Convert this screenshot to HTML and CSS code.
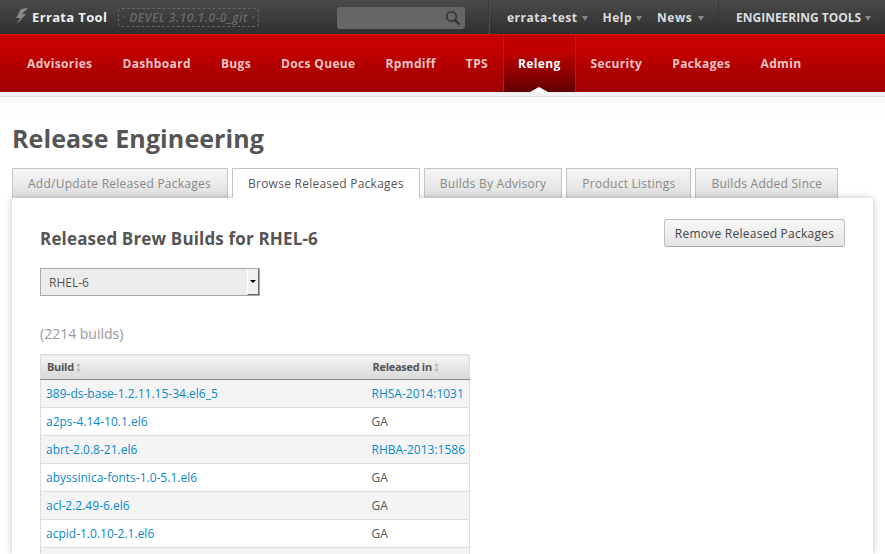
FILE: index.html
```html
<!DOCTYPE html>
<html lang="en">
  <head>
    <meta charset="UTF-8" />
    <title>Release Engineering</title>
    <link rel="stylesheet" href="styles.css">
  </head>
  <body>
    <div class="topbar">
      <div class="brand">
        <svg class="bolt" width="14" height="16" viewBox="0 0 14 16"><path d="M13 0 L6 1 L1 10 L5 10 L2 16 L11 6 L7 6 Z" fill="#8a8a8a"/></svg>
        <span class="brand-name">Errata Tool</span>
      </div>
      <span class="version">&middot; DEVEL 3.10.1.0-0_git &middot;</span>
      <div class="search">
        <svg width="16" height="16" viewBox="0 0 16 16"><circle cx="6.5" cy="6.5" r="4.8" fill="none" stroke="#333" stroke-width="1.6"/><path d="M10 10 L14.5 14.5" stroke="#333" stroke-width="2.4"/></svg>
      </div>
      <div class="user-menu">
        <span class="menu-item">errata-test<i class="caret"></i></span>
        <span class="menu-item">Help<i class="caret"></i></span>
        <span class="menu-item news">News<i class="caret"></i></span>
      </div>
      <div class="tools-menu">
        <span class="menu-item">ENGINEERING TOOLS<i class="caret"></i></span>
      </div>
    </div>

    <div class="mainnav">
      <a>Advisories</a>
      <a>Dashboard</a>
      <a>Bugs</a>
      <a>Docs Queue</a>
      <a>Rpmdiff</a>
      <a>TPS</a>
      <a class="active">Releng</a>
      <a>Security</a>
      <a>Packages</a>
      <a>Admin</a>
    </div>
    <div class="nav-rule"></div>

    <div class="content">
      <h1>Release Engineering</h1>
      <div class="tabs">
        <span class="tab">Add/Update Released Packages</span>
        <span class="tab current">Browse Released Packages</span>
        <span class="tab">Builds By Advisory</span>
        <span class="tab">Product Listings</span>
        <span class="tab">Builds Added Since</span>
      </div>
      <div class="panel">
        <div class="panel-head">
          <h2>Released Brew Builds for RHEL-6</h2>
          <button class="btn">Remove Released Packages</button>
        </div>
        <div class="select">
          <span class="select-value">RHEL-6</span>
          <span class="select-arrow"><i></i></span>
        </div>
        <p class="count">(2214 builds)</p>
        <table class="builds">
          <thead>
            <tr>
              <th class="col-build">Build <svg class="sort" width="5" height="9" viewBox="0 0 5 9"><path d="M2.5 0 L5 3 L3 3 L3 6 L5 6 L2.5 9 L0 6 L2 6 L2 3 L0 3 Z" fill="#bbb"/></svg></th>
              <th>Released in <svg class="sort" width="5" height="9" viewBox="0 0 5 9"><path d="M2.5 0 L5 3 L3 3 L3 6 L5 6 L2.5 9 L0 6 L2 6 L2 3 L0 3 Z" fill="#bbb"/></svg></th>
            </tr>
          </thead>
          <tbody>
            <tr><td><a>389-ds-base-1.2.11.15-34.el6_5</a></td><td><a>RHSA-2014:1031</a></td></tr>
            <tr><td><a>a2ps-4.14-10.1.el6</a></td><td>GA</td></tr>
            <tr><td><a>abrt-2.0.8-21.el6</a></td><td><a>RHBA-2013:1586</a></td></tr>
            <tr><td><a>abyssinica-fonts-1.0-5.1.el6</a></td><td>GA</td></tr>
            <tr><td><a>acl-2.2.49-6.el6</a></td><td>GA</td></tr>
            <tr><td><a>acpid-1.0.10-2.1.el6</a></td><td>GA</td></tr>
            <tr><td></td><td></td></tr>
          </tbody>
        </table>
      </div>
    </div>
  </body>
</html>
```

FILE: styles.css
```css
html, body {
  margin: 0;
  height: 554px;
  overflow: hidden;
}
body {
  font-family: "Open Sans", "Noto Sans", sans-serif;
  font-size: 12px;
  color: #555;
  background: #fff;
}

.topbar {
  display: flex;
  align-items: center;
  height: 34px;
  background: linear-gradient(#4a4a4a, #2f2f2f);
  color: #ddd;
}
.topbar > * {
  flex: none;
}
.brand {
  display: flex;
  align-items: center;
  margin-left: 15px;
  width: 103px;
}
.bolt {
  margin: -2px 3px 0 0;
}
.brand-name {
  color: #f0f0f0;
  font-size: 13px;
  font-weight: 700;
  letter-spacing: 0.35px;
}
.version {
  width: 141px;
  height: 19px;
  line-height: 17px;
  box-sizing: border-box;
  border: 1px dashed #666;
  border-radius: 4px;
  color: #6a6a6a;
  font-size: 12px;
  font-style: italic;
  font-weight: 600;
  text-align: center;
  white-space: nowrap;
  letter-spacing: 0.5px;
}
.search {
  display: flex;
  align-items: center;
  justify-content: flex-end;
  box-sizing: border-box;
  width: 128px;
  height: 22px;
  margin: 2px 0 0 78px;
  padding-right: 4px;
  background: #666;
  border-radius: 3px;
}
.user-menu {
  display: flex;
  align-items: center;
  height: 34px;
  margin-left: 23px;
  padding-left: 18px;
  width: 230px;
  box-sizing: border-box;
  border-left: 1px solid #383838;
  box-shadow: inset 1px 0 0 #4c4c4c;
}
.tools-menu {
  display: flex;
  align-items: center;
  height: 34px;
  padding-left: 17px;
  border-left: 1px solid #383838;
}
.menu-item {
  font-size: 12px;
  font-weight: 700;
  letter-spacing: 0.5px;
  color: #ddd;
  margin-right: 15px;
  white-space: nowrap;
}
.tools-menu .menu-item {
  letter-spacing: 0;
}
.caret {
  display: inline-block;
  margin-left: 4px;
  vertical-align: 1px;
  border-left: 3px solid transparent;
  border-right: 3px solid transparent;
  border-top: 5px solid #888;
}
.news .caret {
  margin-left: 6px;
}

.mainnav {
  display: flex;
  height: 58px;
  padding-left: 12px;
  background: linear-gradient(#c70000, #c60000 20%, #9c0000);
  border-top: 1px solid #d81010;
  box-sizing: border-box;
}
.mainnav a {
  position: relative;
  display: block;
  padding: 0 15px;
  line-height: 58px;
  font-size: 12px;
  font-weight: 700;
  letter-spacing: 0.35px;
  color: #f0c4c4;
}
.mainnav a.active {
  padding: 0 14px;
  color: #fff;
  background: linear-gradient(#c00000 30%, #600000);
  border-left: 1px solid #c81414;
  border-right: 1px solid #c81414;
}
.mainnav a.active::after {
  content: "";
  position: absolute;
  left: 50%;
  bottom: 0;
  margin-left: -9px;
  border-left: 9px solid transparent;
  border-right: 9px solid transparent;
  border-bottom: 5px solid #fff;
}
.nav-rule {
  height: 4px;
  background: #f1f1f1;
  border-bottom: 1px solid #ddd;
}

.content {
  padding: 0 12px;
  background: linear-gradient(#fafafa, #fff 20px);
}
h1 {
  margin: 0;
  padding-top: 23px;
  font-size: 25px;
  line-height: 36px;
  font-weight: 700;
  letter-spacing: 0.1px;
  color: #555;
}
.tabs {
  display: flex;
  gap: 4px;
  margin-top: 12px;
  height: 30px;
}
.tab {
  box-sizing: border-box;
  height: 30px;
  padding: 0 15px;
  line-height: 30px;
  font-size: 12px;
  letter-spacing: 0.25px;
  color: #888;
  border: 1px solid #c4c4c4;
  border-bottom: 0;
  background: linear-gradient(#f6f6f6, #dedede);
}
.tab:first-child {
  padding-right: 16px;
}
.tab.current {
  color: #555;
  background: #fff;
  position: relative;
  z-index: 1;
}
.panel {
  position: relative;
  box-sizing: border-box;
  width: 861px;
  height: 356px;
  padding: 21px 28px;
  overflow: hidden;
  background: #fff;
  box-shadow: 0 0 7px rgba(0, 0, 0, 0.25);
}
.panel-head {
  display: flex;
  justify-content: space-between;
  align-items: flex-start;
}
h2 {
  margin: 9px 0 0;
  font-size: 17px;
  line-height: 22px;
  font-weight: 700;
  letter-spacing: 0.16px;
  color: #555;
}
.btn {
  width: 181px;
  height: 28px;
  padding: 0;
  font-family: inherit;
  font-size: 12px;
  letter-spacing: 0.25px;
  color: #444;
  border: 1px solid #c0c0c0;
  border-bottom-color: #aaa;
  border-radius: 3px;
  background: linear-gradient(#f8f8f8, #e4e4e4);
}
.select {
  display: flex;
  justify-content: space-between;
  box-sizing: border-box;
  width: 220px;
  height: 28px;
  margin-top: 18px;
  border: 1px solid #a8a8a8;
  background: #ececec;
}
.select-value {
  padding-left: 8px;
  line-height: 28px;
  color: #555;
}
.select-arrow {
  display: flex;
  align-items: center;
  justify-content: center;
  width: 12px;
  background: #f0f0f0;
  border-left: 1px solid #fff;
  border-right: 1px solid #666;
  border-bottom: 1px solid #666;
  box-sizing: border-box;
}
.select-arrow i {
  border-left: 3px solid transparent;
  border-right: 3px solid transparent;
  border-top: 3px solid #000;
}
.count {
  margin: 28px 0 0;
  font-size: 14px;
  line-height: 20px;
  color: #999;
}
.builds {
  width: 430px;
  margin-top: 10px;
  border-collapse: collapse;
  table-layout: fixed;
  font-size: 12px;
}
.builds th {
  height: 25px;
  padding: 0 0 1px 6px;
  box-sizing: border-box;
  text-align: left;
  font-size: 11px;
  font-weight: 700;
  letter-spacing: -0.3px;
  color: #555;
  background: linear-gradient(#f4f4f4, #d8d8d8);
  border: 1px solid #ddd;
  border-bottom: 1px solid #888;
}
.builds .col-build {
  width: 326px;
  border-right: 0;
}
.builds th + th {
  border-left: 0;
}
.sort {
  vertical-align: -1px;
}
.builds td {
  height: 27px;
  padding: 0 0 0 5px;
  border-top: 1px solid #ddd;
  border-bottom: 1px solid #ddd;
  color: #555;
  white-space: nowrap;
}
.builds td:first-child {
  border-left: 1px solid #ddd;
}
.builds td:last-child {
  border-right: 1px solid #ddd;
}
.builds tbody tr:nth-child(odd) td {
  background: #f4f4f4;
}
.builds a {
  color: #0b88c8;
}
```
